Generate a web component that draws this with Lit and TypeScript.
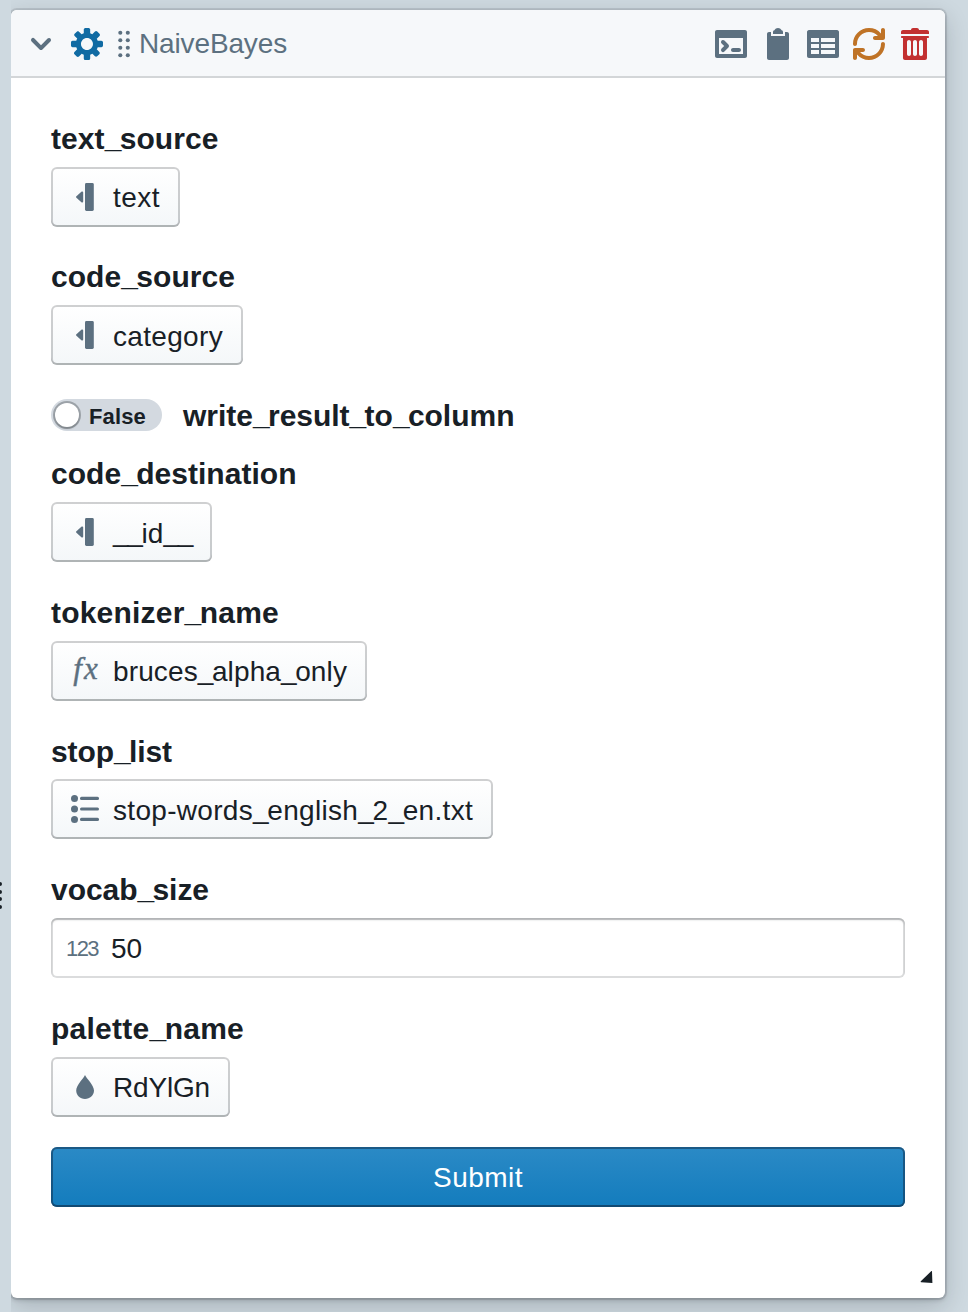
import { LitElement, html, css, svg } from "lit";
import { customElement, property } from "lit/decorators.js";

const icons: Record<string, unknown> = {
  chevron: svg`<path d="M12 5c-.28 0-.53.11-.71.29L8 8.59l-3.29-3.3a1.003 1.003 0 00-1.42 1.42l4 4c.18.18.43.29.71.29s.53-.11.71-.29l4-4A1.003 1.003 0 0012 5z"/>`,
  cog: svg`<path d="M15.19 6.39h-1.85c-.11-.37-.27-.71-.45-1.04l1.36-1.36c.31-.31.31-.82 0-1.13l-1.13-1.13a.803.803 0 00-1.13 0l-1.36 1.36c-.33-.17-.67-.33-1.04-.44V.79c0-.44-.36-.8-.8-.8h-1.6c-.44 0-.8.36-.8.8v1.86c-.39.12-.75.28-1.1.47l-1.3-1.3c-.3-.3-.79-.3-1.09 0L1.82 2.91c-.3.3-.3.79 0 1.09l1.3 1.3c-.2.34-.36.7-.48 1.09H.79c-.44 0-.8.36-.8.8v1.6c0 .44.36.8.8.8h1.85c.11.37.27.71.45 1.04l-1.36 1.36c-.31.31-.31.82 0 1.13l1.13 1.13c.31.31.82.31 1.13 0l1.36-1.36c.33.18.67.33 1.04.44v1.86c0 .44.36.8.8.8h1.6c.44 0 .8-.36.8-.8v-1.86c.39-.12.75-.28 1.1-.47l1.3 1.3c.3.3.79.3 1.09 0l1.09-1.09c.3-.3.3-.79 0-1.09l-1.3-1.3c.19-.35.36-.71.48-1.1h1.85c.44 0 .8-.36.8-.8v-1.6a.816.816 0 00-.81-.79zm-7.2 4.6c-1.66 0-3-1.34-3-3s1.34-3 3-3 3 1.34 3 3-1.34 3-3 3z"/>`,
  drag: svg`${[4.35, 8.15, 11.85, 15.65].map((y) => svg`<circle cx="6.15" cy=${y - 2} r="1.02"/><circle cx="9.9" cy=${y - 2} r="1.02"/>`)}`,
  console: svg`<path d="M15 15H1c-.55 0-1-.45-1-1V2c0-.55.45-1 1-1h14c.55 0 1 .45 1 1v12c0 .55-.45 1-1 1zM14 5H2v8h12V5z" fill-rule="evenodd"/><path d="M4 6c.28 0 .53.12.71.29l2 2a1.003 1.003 0 010 1.42l-2 2a1.003 1.003 0 01-1.42-1.42L4.59 9 3.29 7.71A1.003 1.003 0 014 6zm5 4h3c.55 0 1 .45 1 1s-.45 1-1 1H9c-.55 0-1-.45-1-1s.45-1 1-1z"/>`,
  clipboard: svg`<path d="M11 2c0-.55-.45-1-1-1h.22C9.88.4 9.24 0 8.5 0S7.12.4 6.78 1H7c-.55 0-1 .45-1 1v1h5V2zm2 0h-1v2H5V2H4c-.55 0-1 .45-1 1v12c0 .55.45 1 1 1h9c.55 0 1-.45 1-1V3c0-.55-.45-1-1-1z"/>`,
  table: svg`<path fill-rule="evenodd" d="M15 1H1c-.6 0-1 .5-1 1v12c0 .6.4 1 1 1h14c.6 0 1-.4 1-1V2c0-.5-.4-1-1-1zM6 13H2v-2h4v2zm0-3H2V8h4v2zm0-3H2V5h4v2zm8 6H7v-2h7v2zm0-3H7V8h7v2zm0-3H7V5h7v2z"/>`,
  refresh: svg`<path d="M14.99 6.99c-.55 0-1 .45-1 1 0 3.31-2.69 6-6 6-1.77 0-3.36-.78-4.46-2h1.46c.55 0 1-.45 1-1s-.45-1-1-1h-4c-.55 0-1 .45-1 1v4c0 .55.45 1 1 1s1-.45 1-1v-1.74a7.95 7.95 0 006 2.74c4.42 0 8-3.58 8-8 0-.55-.45-1-1-1zm0-7c-.55 0-1 .45-1 1v1.74a7.95 7.95 0 00-6-2.74c-4.42 0-8 3.58-8 8 0 .55.45 1 1 1s1-.45 1-1c0-3.31 2.69-6 6-6 1.77 0 3.36.78 4.46 2h-1.46c-.55 0-1 .45-1 1s.45 1 1 1h4c.55 0 1-.45 1-1v-4c0-.56-.45-1-1-1z"/>`,
  trash: svg`<path fill-rule="evenodd" d="M14.49 3.99h-13c-.28 0-.5.22-.5.5s.22.5.5.5h.5v10c0 .55.45 1 1 1h10c.55 0 1-.45 1-1v-10h.5c.28 0 .5-.22.5-.5s-.22-.5-.5-.5zM6 13c0 .55-.45 1-1 1s-1-.45-1-1V7c0-.55.45-1 1-1s1 .45 1 1v6zm3 0c0 .55-.45 1-1 1s-1-.45-1-1V7c0-.55.45-1 1-1s1 .45 1 1v6zm3 0c0 .55-.45 1-1 1s-1-.45-1-1V7c0-.55.45-1 1-1s1 .45 1 1v6z"/><path d="M14 1h-4c0-.55-.45-1-1-1H7c-.55 0-1 .45-1 1H2c-.55 0-1 .45-1 1v1h14V2c0-.55-.45-1-1-1z"/>`,
  column: svg`<rect x="8" y="1" width="4.4" height="14" rx=".7"/><path d="M7.1 5.9v4.2c0 .5-.5.8-.9.5L3.7 8.4a.55.55 0 010-.8l2.5-2.2c.4-.3.9 0 .9.5z"/>`,
  list: svg`${[2.7, 8, 13.2].map((y) => svg`<circle cx="2.75" cy=${y} r="1.75"/><rect x="5.5" y=${y - 0.8} width="9.5" height="1.6" rx=".75"/>`)}`,
  tint: svg`<path d="M8 2c-.5 1.5-4.4 5-4.4 7.8C3.6 12.200 5.500 14 8 14s4.500-1.800 4.500-4.200C12.500 7 8.500 3.500 8 2z"/>`,
};

@customElement("ui-icon")
class UiIcon extends LitElement {
  @property() name = "";
  static styles = css`
    :host { display: block; width: 32px; height: 32px; flex: none; }
    .glyph { display: block; fill: currentColor; overflow: visible; }
    .fx { font: italic 31px/32px "Liberation Serif", serif; letter-spacing: 2px; text-align: center; margin: -2px -3px 0 0; -webkit-text-stroke: 0.4px currentColor; }
  `;
  render() {
    if (this.name === "function") return html`<div class="fx">fx</div>`;
    return html`<svg class="glyph" width="32" height="32" viewBox="0 0 16 16">${icons[this.name]}</svg>`;
  }
}

/* Tracks a line of text so that its advance equals the given width. */
@customElement("fit-text")
class FitText extends LitElement {
  @property() text = "";
  @property({ type: Number }) width = 0;
  static styles = css`
    :host { display: block; white-space: nowrap; }
    .line { display: inline-block; }
    .low { margin-right: -0.056em; position: relative; top: var(--underscore-shift, -2px); }
  `;
  firstUpdated() {
    const line = this.renderRoot.querySelector(".line") as HTMLElement;
    const natural = line.getBoundingClientRect().width;
    line.style.letterSpacing = `${(this.width - natural) / this.text.length}px`;
    this.style.width = `${this.width}px`;
  }
  render() {
    return html`<span class="line">${this.text.split(/(_)/).filter(Boolean).map((part) => (part === "_" ? html`<span class="low">_</span>` : part))}</span>`;
  }
}

interface Field {
  label: string;
  labelWidth: number;
  kind: "button" | "number" | "switch";
  icon?: string;
  value: string;
  width: number;
  drop?: boolean;
}

const fields: Field[] = [
  { label: "text_source", labelWidth: 167.5, kind: "button", icon: "column", value: "text", width: 47 },
  { label: "code_source", labelWidth: 184, kind: "button", icon: "column", value: "category", width: 110, drop: true },
  { label: "write_result_to_column", labelWidth: 331.5, kind: "switch", value: "False", width: 57 },
  { label: "code_destination", labelWidth: 245.5, kind: "button", icon: "column", value: "__id__", width: 79, drop: true },
  { label: "tokenizer_name", labelWidth: 228, kind: "button", icon: "function", value: "bruces_alpha_only", width: 234 },
  { label: "stop_list", labelWidth: 121, kind: "button", icon: "list", value: "stop-words_english_2_en.txt", width: 360, drop: true },
  { label: "vocab_size", labelWidth: 158, kind: "number", value: "50", width: 31 },
  { label: "palette_name", labelWidth: 193, kind: "button", icon: "tint", value: "RdYlGn", width: 97 },
];

@customElement("app-root")
class AppRoot extends LitElement {
  static styles = css`
    :host { display: block; width: 968px; height: 1312px; overflow: hidden; position: relative; background: #ced9e0; box-sizing: border-box; padding-left: 11px; color: #182026; font-family: "Liberation Sans", Arial, sans-serif; font-size: 28px; line-height: 36px; }
    .pane { height: 1312px; overflow: hidden; box-sizing: border-box; padding: 10px 23px 14px 0; }
    .card { height: 1288px; box-sizing: border-box; background: #fff; border-radius: 6px; box-shadow: 0 0 0 2px rgba(16,22,26,.1), 0 2px 4px rgba(16,22,26,.2), 0 8px 24px rgba(16,22,26,.2); display: flex; flex-direction: column; }
    .head { height: 68px; box-sizing: border-box; border-bottom: 2px solid #d3d6d8; border-radius: 6px 6px 0 0; background: #f6f8fa; display: flex; align-items: center; padding: 2px 14px 0; color: #5c7080; }
    .cog { color: #106ba3; margin-left: 14px; }
    .drag { margin-left: 5px; }
    .title { margin-left: -1px; margin-right: auto; }
    .tools { display: flex; gap: 14px; }
    .warn { color: #bf7326; }
    .danger { color: #c23030; }
    .body { padding: 43px 40px 0; flex: 1; display: flex; flex-direction: column; align-items: flex-start; }
    .field { margin-bottom: 33px; width: 100%; }
    .field:nth-child(1) { margin-bottom: 32px; }
    .field:nth-child(2) { margin-bottom: 34px; }
    .label { font-size: 30px; font-weight: 700; height: 36px; margin-bottom: 10px; --underscore-shift: -1px; }
    .field:nth-child(6) .label { margin-bottom: 9px; }
    .btn { display: inline-flex; align-items: center; height: 60px; box-sizing: border-box; padding: 0 20px 0 18px; gap: 12px; border-radius: 6px; background: linear-gradient(#fff, #f4f7f9); box-shadow: inset 0 0 0 2px rgba(16,22,26,.2), inset 0 -2px 0 rgba(16,22,26,.12); vertical-align: top; }
    .btn ui-icon, .unit { color: #5c7080; }
    .btn fit-text { padding-top: 2px; }
    .btn .drop { padding-top: 4px; }
    .input { display: flex; align-items: center; height: 60px; box-sizing: border-box; padding: 2px 15px 0; gap: 13px; border-radius: 6px; background: #fff; box-shadow: inset 0 0 0 2px rgba(16,22,26,.15), inset 0 2px 2px rgba(16,22,26,.2); }
    .unit { font-size: 22px; }
    .switchrow { display: flex; align-items: center; gap: 21px; height: 32px; margin-bottom: 25px; }
    .switch { display: flex; align-items: center; width: 111px; height: 32px; box-sizing: border-box; padding-left: 4px; gap: 9px; border-radius: 16px; background: #d3d9e0; font-size: 22px; font-weight: 700; }
    .knob { width: 24px; height: 24px; margin: 0 1px 0 0; border-radius: 50%; background: #fff; box-shadow: 0 0 0 2px rgba(16,22,26,.28), 0 2px 2px rgba(16,22,26,.2); }
    .inline { font-size: 30px; font-weight: 700; padding-top: 2px; --underscore-shift: -1px; }
    .switch fit-text { padding-top: 4px; }
    .submit { width: 100%; height: 60px; box-sizing: border-box; padding-top: 2px; display: flex; align-items: center; justify-content: center; margin-top: -3px; border-radius: 6px; color: #fff; background: linear-gradient(#2b8ac6, #137cbd); box-shadow: inset 0 0 0 2px rgba(16,50,80,.55), inset 0 -2px 0 rgba(16,22,26,.2); }
    .grip { display: block; align-self: flex-end; margin: 0 12px 15px 0; fill: #182026; }
    .edge { position: absolute; left: -2px; top: 882px; display: grid; gap: 3.6px; }
    .dot { width: 4px; height: 4px; border-radius: 50%; background: #182026; }
  `;

  renderField(f: Field) {
    if (f.kind === "switch")
      return html`<div class="switchrow">
        <div class="switch"><span class="knob"></span><fit-text text=${f.value} width=${f.width}></fit-text></div>
        <fit-text class="inline" text=${f.label} width=${f.labelWidth}></fit-text>
      </div>`;
    return html`<div class="field">
      <fit-text class="label" text=${f.label} width=${f.labelWidth}></fit-text>
      ${f.kind === "number"
        ? html`<div class="input"><fit-text class="unit" text="123" width="32"></fit-text><fit-text text=${f.value} width=${f.width}></fit-text></div>`
        : html`<div class="btn"><ui-icon name=${f.icon!}></ui-icon><fit-text class=${f.drop ? "drop" : ""} text=${f.value} width=${f.width}></fit-text></div>`}
    </div>`;
  }

  render() {
    return html`
      <div class="pane">
        <div class="card">
          <div class="head">
            <ui-icon name="chevron"></ui-icon>
            <ui-icon class="cog" name="cog"></ui-icon>
            <ui-icon class="drag" name="drag"></ui-icon>
            <fit-text class="title" text="NaiveBayes" width="148"></fit-text>
            <div class="tools">
              <ui-icon name="console"></ui-icon>
              <ui-icon name="clipboard"></ui-icon>
              <ui-icon name="table"></ui-icon>
              <ui-icon class="warn" name="refresh"></ui-icon>
              <ui-icon class="danger" name="trash"></ui-icon>
            </div>
          </div>
          <div class="body">
            ${fields.map((f) => this.renderField(f))}
            <div class="submit"><fit-text text="Submit" width="90"></fit-text></div>
          </div>
          <svg class="grip" width="13" height="13" viewBox="0 0 13 13"><path d="M.8 11.200L11.400 1Q12 .6 12 1.500L12.400 13 1.200 12.200Q.2 12 .8 11.200z"/></svg>
        </div>
      </div>
      <div class="edge"><i class="dot"></i><i class="dot"></i><i class="dot"></i><i class="dot"></i></div>
    `;
  }
}
